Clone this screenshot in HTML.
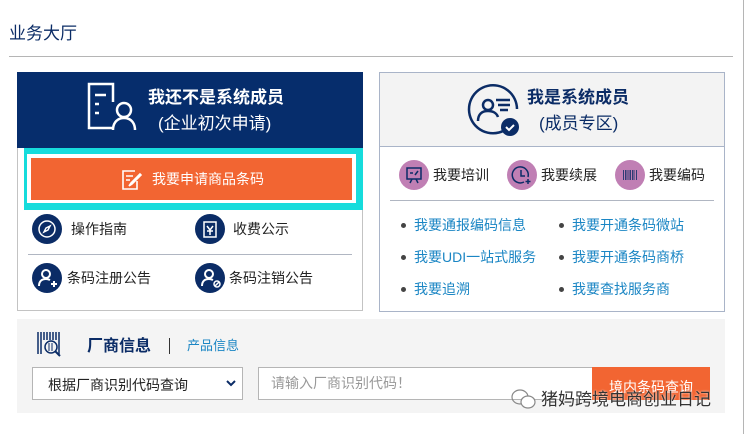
<!DOCTYPE html>
<html><head><meta charset="utf-8"><style>
*{margin:0;padding:0;box-sizing:border-box}
body{width:747px;height:434px;background:#fff;position:relative;overflow:hidden;font-family:"Liberation Sans","Noto Sans CJK SC",sans-serif;color:#222}
.a{position:absolute;white-space:nowrap}
.t14{font-size:14px;line-height:16px}
.lk{color:#1b86c4;font-size:14px;line-height:16px}
.dot{position:absolute;width:5px;height:5px;border-radius:50%;background:#444}
.pc{position:absolute;width:30px;height:30px;border-radius:50%;background:#c07fb4}
.bc{position:absolute;width:30px;height:30px;border-radius:50%;background:#0b2c66}
</style></head><body>
<div class="a" style="left:9px;top:24px;font-size:17px;line-height:20px;color:#0b2c66">业务大厅</div>
<div class="a" style="left:9px;top:56px;width:724px;height:1px;background:#b5b5b5"></div>
<div class="a" style="left:743px;top:0;width:1px;height:434px;background:#b5b5b5"></div>

<!-- left panel -->
<div class="a" style="left:17px;top:72px;width:346px;height:239px;border:1px solid #c3c3c3;border-top:none"></div>
<div class="a" style="left:17px;top:72px;width:346px;height:76px;background:#062d6c"></div>
<svg class="a" style="left:86px;top:82px" width="52" height="50" viewBox="0 0 52 50" fill="none" stroke="#fff" stroke-width="2.5">
<path d="M28 46H3V2h24v18"/><path d="M9 13h11M9 22h4M9 31h4"/><circle cx="38" cy="28" r="7"/><path d="M27 48c0-8 5-12 11-12s11 4 11 12"/></svg>
<div class="a" style="left:148px;top:88px;font-size:17px;line-height:20px;font-weight:bold;color:#fff">我还不是系统成员</div>
<div class="a" style="left:158px;top:114px;font-size:17px;line-height:20px;color:#fff">(企业初次申请)</div>
<div class="a" style="left:24px;top:148px;width:339px;height:62px;background:#16dcdc"></div>
<div class="a" style="left:27px;top:154px;width:329px;height:49px;background:#fff"></div>
<div class="a" style="left:31px;top:158px;width:321px;height:42px;background:#f26532"></div>
<svg class="a" style="left:119px;top:168px" width="24" height="24" viewBox="0 0 24 24" fill="none" stroke="#fff" stroke-width="1.6">
<path d="M16 3H4v18h14v-8"/><path d="M7 8h7M7 12h4"/><path d="M21 6l-9 9-2 3 3-2 9-9z"/></svg>
<div class="a t14" style="left:152px;top:171px;color:#fff">我要申请商品条码</div>
<div class="bc" style="left:32px;top:214px"></div>
<svg class="a" style="left:32px;top:214px" width="30" height="30" viewBox="0 0 30 30" fill="none" stroke="#fff" stroke-width="1.5"><circle cx="15" cy="15" r="8"/><path d="M18 12l-2 4-4 2 2-4z"/></svg>
<div class="a t14" style="left:71px;top:221px">操作指南</div>
<div class="bc" style="left:195px;top:214px"></div>
<svg class="a" style="left:195px;top:214px" width="30" height="30" viewBox="0 0 30 30" fill="none" stroke="#fff" stroke-width="1.5"><rect x="9" y="8" width="12" height="15"/><path d="M12 12l3 4 3-4M15 16v5M12 17h6"/></svg>
<div class="a t14" style="left:233px;top:221px">收费公示</div>
<div class="a" style="left:28px;top:254px;width:324px;height:1px;background:#b0b6c2"></div>
<div class="bc" style="left:32px;top:263px"></div>
<svg class="a" style="left:32px;top:263px" width="30" height="30" viewBox="0 0 30 30" fill="none" stroke="#fff" stroke-width="2"><circle cx="14" cy="11" r="4"/><path d="M7 23c0-5 3-7 7-7 2 0 3 .5 4 1"/><path d="M22 18v6M19 21h6"/></svg>
<div class="a t14" style="left:67px;top:270px">条码注册公告</div>
<div class="bc" style="left:195px;top:263px"></div>
<svg class="a" style="left:195px;top:263px" width="30" height="30" viewBox="0 0 30 30" fill="none" stroke="#fff" stroke-width="2"><circle cx="14" cy="11" r="4"/><path d="M7 23c0-5 3-7 7-7 2 0 3 .5 4 1"/><circle cx="22" cy="21" r="3" stroke-width="1.5"/><path d="M20 23l4-4" stroke-width="1.5"/></svg>
<div class="a t14" style="left:229px;top:270px">条码注销公告</div>

<!-- right panel -->
<div class="a" style="left:379px;top:72px;width:346px;height:240px;border:1px solid #a9b4c8"></div>
<div class="a" style="left:380px;top:73px;width:344px;height:74px;background:#f3f3f3;border-bottom:1px solid #a9b4c8"></div>
<svg class="a" style="left:466px;top:83px" width="56" height="56" viewBox="0 0 56 56" fill="none" stroke="#0b2c66" stroke-width="2.5">
<path d="M42 45A24 24 0 1 1 51 26"/><circle cx="22" cy="22" r="5"/><path d="M12 38c0-7 4-10 10-10s9 3 10 6"/><path d="M30 17h14M32 22h12M34 27h8"/>
<circle cx="44" cy="44" r="9" fill="#0b2c66" stroke="none"/><path d="M40 44l3 3 5-5" stroke="#fff" stroke-width="2"/></svg>
<div class="a" style="left:527px;top:88px;font-size:17px;line-height:20px;font-weight:bold;color:#0b2c66">我是系统成员</div>
<div class="a" style="left:539px;top:114px;font-size:17px;line-height:20px;color:#0b2c66">(成员专区)</div>
<div class="pc" style="left:399px;top:160px"></div>
<svg class="a" style="left:399px;top:160px" width="30" height="30" viewBox="0 0 30 30" fill="none" stroke="#0b2c66" stroke-width="1.5"><rect x="8" y="8" width="14" height="11"/><path d="M11 13h3M16 15l3-4M11 23l2-4M19 23l-2-4"/></svg>
<div class="a t14" style="left:433px;top:167px">我要培训</div>
<div class="pc" style="left:507px;top:160px"></div>
<svg class="a" style="left:507px;top:160px" width="30" height="30" viewBox="0 0 30 30" fill="none" stroke="#0b2c66" stroke-width="1.5"><path d="M21 17A8 8 0 1 0 17 22"/><path d="M14 10v6h4M21 19v5M18.5 21.5h5"/></svg>
<div class="a t14" style="left:541px;top:167px">我要续展</div>
<div class="pc" style="left:615px;top:160px"></div>
<svg class="a" style="left:615px;top:160px" width="30" height="30" viewBox="0 0 30 30" stroke="#0b2c66" stroke-width="0.8"><path d="M8.5 10v10M10.5 10v10M12 10v10M14 10v10M15.5 10v10M17.5 10v10M19 10v10M21.5 10v10"/></svg>
<div class="a t14" style="left:649px;top:167px">我要编码</div>
<div class="a" style="left:390px;top:200px;width:324px;height:1px;background:#b0b6c2"></div>
<div class="dot" style="left:401px;top:223px"></div><div class="a lk" style="left:414px;top:217px">我要通报编码信息</div>
<div class="dot" style="left:559px;top:223px"></div><div class="a lk" style="left:572px;top:217px">我要开通条码微站</div>
<div class="dot" style="left:401px;top:255px"></div><div class="a lk" style="left:414px;top:249px">我要UDI一站式服务</div>
<div class="dot" style="left:559px;top:255px"></div><div class="a lk" style="left:572px;top:249px">我要开通条码商桥</div>
<div class="dot" style="left:401px;top:287px"></div><div class="a lk" style="left:414px;top:281px">我要追溯</div>
<div class="dot" style="left:559px;top:287px"></div><div class="a lk" style="left:572px;top:281px">我要查找服务商</div>

<!-- bottom -->
<div class="a" style="left:17px;top:319px;width:708px;height:94px;background:#f4f4f4"></div>
<svg class="a" style="left:36px;top:332px" width="30" height="30" viewBox="0 0 30 30" fill="none" stroke="#0b2c66">
<path d="M2 0v22M5 0v22M8 0v8M11 0v8M14 0v8M17 0v8M20 0v8M23 0v22" stroke-width="1.5"/><circle cx="15" cy="15" r="6" stroke-width="1.5"/><path d="M13 11v8M16 11v8" /><path d="M19 19l5 5" stroke-width="2"/></svg>
<div class="a" style="left:87px;top:337px;font-size:16px;line-height:19px;font-weight:bold;color:#0b2c66">厂商信息</div>
<div class="a" style="left:169px;top:338px;width:1px;height:16px;background:#333"></div>
<div class="a" style="left:187px;top:338px;font-size:13px;line-height:15px;color:#1b86c4">产品信息</div>
<div class="a" style="left:32px;top:367px;width:211px;height:33px;background:#fff;border:1px solid #b5b5b5"></div>
<div class="a t14" style="left:48px;top:377px">根据厂商识别代码查询</div>
<svg class="a" style="left:226px;top:380px" width="10" height="7" viewBox="0 0 10 7" fill="none" stroke="#0b2c66" stroke-width="2"><path d="M1 1l4 4 4-4"/></svg>
<div class="a" style="left:258px;top:367px;width:335px;height:33px;background:#fff;border:1px solid #b5b5b5"></div>
<div class="a t14" style="left:271px;top:375px;color:#999">请输入厂商识别代码！</div>
<div class="a" style="left:592px;top:367px;width:118px;height:33px;background:#f26532"></div>
<div class="a t14" style="left:609px;top:379px;color:#fff">境内条码查询</div>
<svg class="a" style="left:508px;top:384px" width="30" height="30" viewBox="0 0 30 30" fill="none" stroke="#888" stroke-width="1.2"><ellipse cx="12" cy="13" rx="8" ry="7"/><ellipse cx="20" cy="18" rx="7" ry="6" fill="#fff"/></svg>
<div class="a" style="left:541px;top:390px;font-size:17px;line-height:20px;color:#333;text-shadow:0 0 2px #fff">猪妈跨境电商创业日记</div>
</body></html>
